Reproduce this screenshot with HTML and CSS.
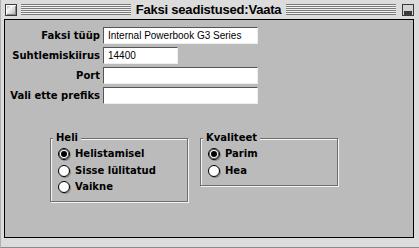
FILE: index.html
```html
<!DOCTYPE html>
<html lang="et">
<head>
<meta charset="utf-8">
<title>Faksi seadistused: Vaata</title>
<link rel="stylesheet" href="styles.css">
</head>
<body>
<div class="window">
  <div class="titlebar">
    <span class="closebox"></span>
    <span class="stripes"></span>
    <span class="title">Faksi seadistused:Vaata</span>
    <span class="stripes"></span>
    <span class="zoombox"><span class="zoominner"></span></span>
  </div>
  <div class="content">
    <div class="form">
      <label class="lbl">Faksi tüüp</label>
      <div class="field long">Internal Powerbook G3 Series</div>
      <label class="lbl">Suhtlemiskiirus</label>
      <div class="field short">14400</div>
      <label class="lbl">Port</label>
      <div class="field long"></div>
      <label class="lbl">Vali ette prefiks</label>
      <div class="field long"></div>
    </div>
    <div class="groups">
      <fieldset class="group">
        <legend class="legend">Heli</legend>
        <div class="options">
          <div class="opt"><span class="radio on"></span><span class="optlbl">Helistamisel</span></div>
          <div class="opt"><span class="radio"></span><span class="optlbl">Sisse lülitatud</span></div>
          <div class="opt"><span class="radio"></span><span class="optlbl">Vaikne</span></div>
        </div>
      </fieldset>
      <fieldset class="group">
        <legend class="legend">Kvaliteet</legend>
        <div class="options">
          <div class="opt"><span class="radio on"></span><span class="optlbl">Parim</span></div>
          <div class="opt"><span class="radio"></span><span class="optlbl">Hea</span></div>
        </div>
      </fieldset>
    </div>
  </div>
</div>
</body>
</html>
```
FILE: styles.css
```css
html, body {
  margin: 0;
  padding: 0;
  background: #dcdcdc;
}
.window {
  box-sizing: border-box;
  width: 419px;
  height: 248px;
  background: #dcdcdc;
  padding: 0 5px 9px 4px;
  display: flex;
  flex-direction: column;
  border-bottom: 1px solid #8a8a8a;
  border-left: 1px solid #b0b0b0;
  padding-left: 3px;
}
.titlebar {
  height: 19px;
  display: flex;
  align-items: center;
  flex: none;
}
.closebox {
  box-sizing: border-box;
  width: 12px;
  height: 12px;
  margin-left: 1px;
  border: 1px solid #3a3a3a;
  background: linear-gradient(135deg, #9a9a9a 0%, #f4f4f4 35%, #d0d0d0 70%, #a8a8a8 100%);
  box-shadow: inset 1px 1px 0 #fff, inset -1px -1px 0 #888;
  flex: none;
}
.stripes {
  flex: 1;
  height: 11px;
  margin-left: 4px;
  background: repeating-linear-gradient(to bottom, #7a7a7a 0, #7a7a7a 1px, #f2f2f2 1px, #f2f2f2 2px);
}
.stripes + .zoombox {
  margin-left: 6px;
}
.title + .stripes {
  margin-left: 0;
}
.title {
  padding: 0 5px;
  font-family: "Liberation Sans", Arial, sans-serif;
  font-weight: bold;
  font-size: 13px;
  letter-spacing: -0.2px;
  line-height: 19px;
  color: #000;
  white-space: nowrap;
}
.zoombox {
  box-sizing: border-box;
  width: 12px;
  height: 12px;
  border: 1px solid #3a3a3a;
  background: #d4d4d4;
  position: relative;
  flex: none;
}
.zoominner {
  position: absolute;
  left: 1px;
  top: 1px;
  width: 6px;
  height: 5px;
  border: 1px solid #3a3a3a;
  border-width: 0 0 1px 0;
  box-shadow: 0 3px 0 #3a3a3a;
  width: 8px;
}
.content {
  flex: 1;
  border: 1px solid #000;
  background: #bbbbbb;
  padding-top: 7px;
  display: flex;
  flex-direction: column;
}
.form {
  display: grid;
  grid-template-columns: 95px auto;
  column-gap: 3px;
  row-gap: 3px;
  grid-auto-rows: 17px;
  align-items: center;
}
.lbl {
  text-align: right;
  font-family: "DejaVu Sans", sans-serif;
  font-weight: bold;
  font-size: 10px;
  line-height: 17px;
  color: #000;
  white-space: nowrap;
}
.field {
  box-sizing: border-box;
  height: 17px;
  background: #fff;
  border-top: 1px solid #555;
  border-left: 1px solid #555;
  border-right: 1px solid #eee;
  border-bottom: 1px solid #eee;
  padding-left: 4px;
  font-family: "Liberation Sans", Arial, sans-serif;
  font-size: 10px;
  line-height: 15px;
  color: #000;
  white-space: nowrap;
  overflow: hidden;
}
.long { width: 155px; }
.short { width: 75px; }
.groups {
  display: flex;
  align-items: flex-start;
  gap: 12px;
  margin-left: 45px;
  margin-top: 28px;
}
.group {
  box-sizing: border-box;
  width: 138px;
  margin: 0;
  padding: 0 0 5.5px 0;
  border: 1px solid #6e6e6e;
  box-shadow: 1px 1px 0 #f4f4f4, inset 1px 1px 0 #f4f4f4;
  min-width: 0;
}
.legend {
  margin-left: 2px;
  padding: 0 3px;
  background: #bbbbbb;
  font-family: "DejaVu Sans", sans-serif;
  font-weight: bold;
  font-size: 10px;
  line-height: 12px;
  color: #000;
}
.options {
  padding: 2px 0 0 7px;
}
.opt {
  height: 16.5px;
  display: flex;
  align-items: center;
  gap: 5px;
}
.radio {
  box-sizing: border-box;
  width: 12px;
  height: 12px;
  border-radius: 50%;
  border: 1px solid #000;
  background: radial-gradient(circle at 40% 40%, #fff 0 55%, #e4e4e4 100%);
  box-shadow: 1px 1px 0 #8a8a8a;
  position: relative;
  flex: none;
}
.radio.on {
  box-shadow: inset 0 0 0 1px #555, 1px 1px 0 #8a8a8a;
}
.radio.on::after {
  content: "";
  position: absolute;
  left: 2px;
  top: 2px;
  width: 6px;
  height: 6px;
  border-radius: 50%;
  background: #000;
}
.optlbl {
  font-family: "DejaVu Sans", sans-serif;
  font-weight: bold;
  font-size: 10px;
  line-height: 12px;
  color: #000;
  white-space: nowrap;
}
```
